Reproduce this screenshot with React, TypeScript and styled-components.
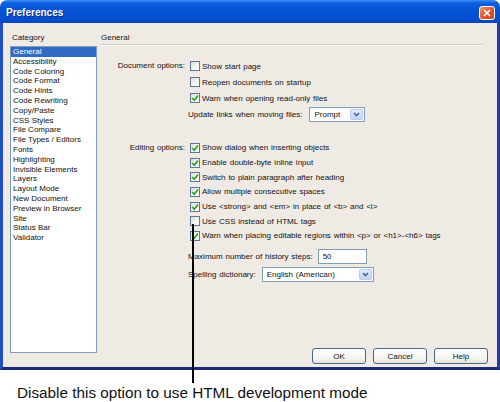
import React from 'react';
import styled, { createGlobalStyle } from 'styled-components';

const GlobalStyle = createGlobalStyle`
  html, body {
    margin: 0;
    padding: 0;
    background: #ffffff;
  }
  body {
    width: 500px;
    height: 402px;
    overflow: hidden;
    font-family: "Liberation Sans", Arial, sans-serif;
  }
`;

const Page = styled.div`
  position: relative;
  width: 500px;
  height: 402px;
  display: flex;
  flex-direction: column;
`;

const Window = styled.div`
  width: 500px;
  height: 370px;
  display: flex;
  flex-direction: column;
  border-radius: 7px 7px 0 0;
  overflow: hidden;
  word-spacing: 0.6px;
`;

const TitleBar = styled.div`
  height: 23px;
  flex-shrink: 0;
  display: flex;
  align-items: center;
  justify-content: space-between;
  padding: 0 5px 0 6px;
  background: linear-gradient(#3d8df5 0%, #0c5fdc 14%, #0653d6 45%, #0550d0 80%, #0a45bd 100%);
`;

const Title = styled.span`
  color: #ffffff;
  font-weight: 700;
  font-size: 10px;
  word-spacing: 0;
  text-shadow: 1px 1px 0 #0a2a8a;
  margin-top: 2px;
`;

const CloseButton = styled.div`
  width: 14px;
  height: 12px;
  border: 1px solid #ffffff;
  border-radius: 3px;
  background: linear-gradient(135deg, #f0946a 0%, #e2582c 50%, #c8431e 100%);
  display: flex;
  align-items: center;
  justify-content: center;
  margin-top: 3px;
`;

const Body = styled.div`
  flex: 1;
  display: flex;
  padding: 9px 9px 3px 7px;
  background: #efebe4;
  border-left: 3px solid #1f4fc2;
  border-right: 3px solid #1f3fa8;
  border-bottom: 3px solid #1d2a77;
`;

const CategoryColumn = styled.div`
  width: 87px;
  display: flex;
  flex-direction: column;
  padding-bottom: 11px;
`;

const GroupLabel = styled.div<{ indent?: number }>`
  font-size: 8px;
  line-height: 10px;
  height: 10px;
  margin-top: 1px;
  color: #111111;
  margin-left: ${(p) => p.indent ?? 0}px;
`;

const ListBox = styled.div`
  flex: 1;
  margin-top: 3px;
  background: #ffffff;
  border: 1px solid #7f9db9;
  display: flex;
  flex-direction: column;
`;

const ListItem = styled.div<{ selected?: boolean }>`
  font-size: 8px;
  line-height: 9.8px;
  height: 9.8px;
  padding-left: 2px;
  white-space: nowrap;
  word-spacing: 0;
  color: ${(p) => (p.selected ? '#ffffff' : '#111111')};
  background: ${(p) => (p.selected ? '#316ac5' : 'transparent')};
`;

const MainColumn = styled.div`
  flex: 1;
  margin-left: 3px;
  display: flex;
  flex-direction: column;
`;

const Divider = styled.div`
  margin: 1px 5px 0 0;
  border-top: 1px solid #cfcbc0;
  border-bottom: 1px solid #ffffff;
`;

const Section = styled.div<{ top: number }>`
  display: flex;
  margin-top: ${(p) => p.top}px;
`;

const SectionLabel = styled.div<{ rowHeight: number }>`
  width: 85px;
  flex-shrink: 0;
  text-align: right;
  font-size: 8px;
  height: ${(p) => p.rowHeight}px;
  line-height: ${(p) => p.rowHeight}px;
  color: #111111;
  white-space: nowrap;
`;

const SectionRows = styled.div`
  margin-left: 5px;
  display: flex;
  flex-direction: column;
`;

const CheckRow = styled.div<{ rowHeight: number }>`
  height: ${(p) => p.rowHeight}px;
  display: flex;
  align-items: center;
  gap: 2px;
  font-size: 8px;
  color: #111111;
  white-space: nowrap;
`;

const Box = styled.div`
  width: 8px;
  height: 8px;
  border: 1px solid #5d7797;
  background: linear-gradient(135deg, #dcdcd4 0%, #f6f6f2 60%, #ffffff 100%);
  display: flex;
  align-items: center;
  justify-content: center;
`;

const FieldRow = styled.div<{ top: number; gap: number }>`
  margin-top: ${(p) => p.top}px;
  margin-left: -2px;
  height: 15px;
  display: flex;
  align-items: center;
  gap: ${(p) => p.gap}px;
  font-size: 8px;
  color: #111111;
  white-space: nowrap;
`;

const Combo = styled.div<{ width: number }>`
  width: ${(p) => p.width}px;
  height: 15px;
  box-sizing: border-box;
  border: 1px solid #7f9db9;
  background: #ffffff;
  display: flex;
  align-items: center;
  justify-content: space-between;
  padding: 1px 1px 1px 4px;
  font-size: 8px;
  color: #111111;
`;

const ComboButton = styled.div`
  width: 13px;
  height: 11px;
  border-radius: 2px;
  border: 1px solid #b9ccf6;
  box-sizing: border-box;
  background: linear-gradient(#e2ebfe, #c1d3fb);
  display: flex;
  align-items: center;
  justify-content: center;
`;

const TextField = styled.div`
  width: 49px;
  height: 15px;
  box-sizing: border-box;
  border: 1px solid #7f9db9;
  background: #ffffff;
  padding-left: 4px;
  font-size: 8px;
  line-height: 13px;
  color: #111111;
`;

const ButtonBar = styled.div`
  margin-top: auto;
  display: flex;
  justify-content: flex-end;
  gap: 7px;
`;

const Button = styled.div`
  width: 54px;
  height: 16px;
  box-sizing: border-box;
  border: 1px solid #4d6690;
  border-radius: 3px;
  background: linear-gradient(#ffffff 0%, #f4f3ee 70%, #e3e1d8 100%);
  font-size: 8px;
  color: #111111;
  display: flex;
  align-items: center;
  justify-content: center;
`;

const Caption = styled.div`
  padding: 14px 0 0 17px;
  font-size: 15.3px;
  line-height: 18px;
  color: #111111;
  white-space: nowrap;
`;

const Pointer = styled.div`
  position: absolute;
  left: 192px;
  top: 224px;
  width: 1.5px;
  height: 159px;
  background: #000000;
`;

const categories = [
  'General',
  'Accessibility',
  'Code Coloring',
  'Code Format',
  'Code Hints',
  'Code Rewriting',
  'Copy/Paste',
  'CSS Styles',
  'File Compare',
  'File Types / Editors',
  'Fonts',
  'Highlighting',
  'Invisible Elements',
  'Layers',
  'Layout Mode',
  'New Document',
  'Preview in Browser',
  'Site',
  'Status Bar',
  'Validator',
];

const documentOptions = [
  { text: 'Show start page', checked: false },
  { text: 'Reopen documents on startup', checked: false },
  { text: 'Warn when opening read-only files', checked: true },
];

const editingOptions = [
  { text: 'Show dialog when inserting objects', checked: true },
  { text: 'Enable double-byte inline input', checked: true },
  { text: 'Switch to plain paragraph after heading', checked: true },
  { text: 'Allow multiple consecutive spaces', checked: true },
  { text: 'Use <strong> and <em> in place of <b> and <i>', checked: true },
  { text: 'Use CSS instead of HTML tags', checked: false },
  { text: 'Warn when placing editable regions within <p> or <h1>-<h6> tags', checked: true },
];

const CheckMark = () => (
  <svg width="8" height="8" viewBox="0 0 8 8">
    <polyline points="1.2,4 3.2,6.2 7,1.6" fill="none" stroke="#21a121" strokeWidth="1.6" />
  </svg>
);

const Chevron = () => (
  <svg width="7" height="5" viewBox="0 0 7 5">
    <polyline points="1,1 3.5,3.6 6,1" fill="none" stroke="#4d6185" strokeWidth="1.5" />
  </svg>
);

const CloseIcon = () => (
  <svg width="8" height="8" viewBox="0 0 8 8">
    <path d="M1 1 L7 7 M7 1 L1 7" stroke="#ffffff" strokeWidth="1.7" />
  </svg>
);

const Checkbox: React.FC<{ checked: boolean; text: string; rowHeight: number }> = ({ checked, text, rowHeight }) => (
  <CheckRow rowHeight={rowHeight}>
    <Box>{checked && <CheckMark />}</Box>
    <span>{text}</span>
  </CheckRow>
);

const App: React.FC = () => {
  return (
    <Page>
      <GlobalStyle />
      <Window>
        <TitleBar>
          <Title>Preferences</Title>
          <CloseButton>
            <CloseIcon />
          </CloseButton>
        </TitleBar>
        <Body>
          <CategoryColumn>
            <GroupLabel indent={2}>Category</GroupLabel>
            <ListBox>
              {categories.map((c, i) => (
                <ListItem key={c} selected={i === 0}>
                  {c}
                </ListItem>
              ))}
            </ListBox>
          </CategoryColumn>
          <MainColumn>
            <GroupLabel indent={1}>General</GroupLabel>
            <Divider />
            <Section top={12}>
              <SectionLabel rowHeight={16}>Document options:</SectionLabel>
              <SectionRows>
                {documentOptions.map((o) => (
                  <Checkbox key={o.text} checked={o.checked} text={o.text} rowHeight={16} />
                ))}
                <FieldRow top={0.5} gap={7}>
                  <span>Update links when moving files:</span>
                  <Combo width={56}>
                    <span>Prompt</span>
                    <ComboButton>
                      <Chevron />
                    </ComboButton>
                  </Combo>
                </FieldRow>
              </SectionRows>
            </Section>
            <Section top={19}>
              <SectionLabel rowHeight={14.7}>Editing options:</SectionLabel>
              <SectionRows>
                {editingOptions.map((o) => (
                  <Checkbox key={o.text} checked={o.checked} text={o.text} rowHeight={14.7} />
                ))}
                <FieldRow top={5.5} gap={5}>
                  <span>Maximum number of history steps:</span>
                  <TextField>50</TextField>
                </FieldRow>
                <FieldRow top={3} gap={6}>
                  <span>Spelling dictionary:</span>
                  <Combo width={112}>
                    <span>English (American)</span>
                    <ComboButton>
                      <Chevron />
                    </ComboButton>
                  </Combo>
                </FieldRow>
              </SectionRows>
            </Section>
            <ButtonBar>
              <Button>OK</Button>
              <Button>Cancel</Button>
              <Button>Help</Button>
            </ButtonBar>
          </MainColumn>
        </Body>
      </Window>
      <Caption>Disable this option to use HTML development mode</Caption>
      <Pointer />
    </Page>
  );
};

export default App;
